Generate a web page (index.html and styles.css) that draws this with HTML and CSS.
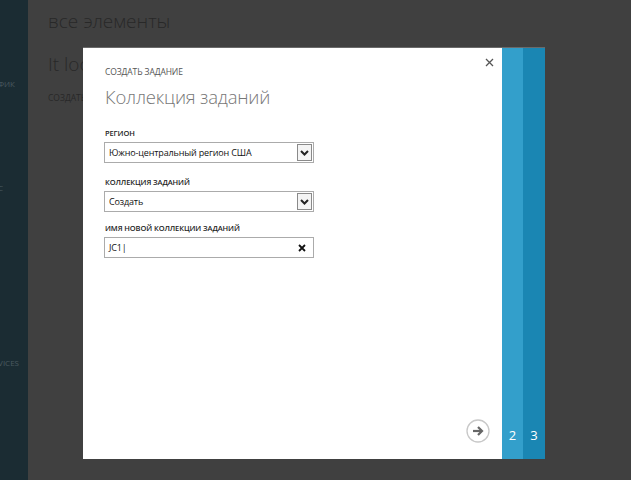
FILE: index.html
```html
<!DOCTYPE html>
<html lang="ru">
<head>
<meta charset="utf-8">
<title>Создать задание</title>
<link rel="stylesheet" href="styles.css">
</head>
<body>
<div class="app">
  <nav class="sidebar">
    <div class="nav-item n1">ГРАФИК</div>
    <div class="nav-item n2">C</div>
    <div class="nav-item n3">SERVICES</div>
  </nav>
  <main class="main">
    <h1 class="page-title">все элементы</h1>
    <div class="page-sub">It looks like you have no job collections</div>
    <div class="page-link">СОЗДАТЬ ЗАДАНИЕ</div>
  </main>
</div>

<div class="dialog">
  <section class="panel">
    <button class="close" aria-label="Закрыть">
      <svg width="9" height="9" viewBox="0 0 9 9"><path d="M1 1 L8 8 M8 1 L1 8" stroke="#555" stroke-width="1.3"/></svg>
    </button>
    <div class="eyebrow">СОЗДАТЬ ЗАДАНИЕ</div>
    <h2 class="title">Коллекция заданий</h2>

    <div class="field f1">
      <label class="label">РЕГИОН</label>
      <div class="select">
        <span class="value">Южно-центральный регион США</span>
        <span class="drop"><svg width="9" height="6" viewBox="0 0 9 6"><path d="M1 1 L4.5 4.5 L8 1" fill="none" stroke="#222" stroke-width="2"/></svg></span>
      </div>
    </div>

    <div class="field f2">
      <label class="label">КОЛЛЕКЦИЯ ЗАДАНИЙ</label>
      <div class="select">
        <span class="value">Создать</span>
        <span class="drop"><svg width="9" height="6" viewBox="0 0 9 6"><path d="M1 1 L4.5 4.5 L8 1" fill="none" stroke="#222" stroke-width="2"/></svg></span>
      </div>
    </div>

    <div class="field f3">
      <label class="label">ИМЯ НОВОЙ КОЛЛЕКЦИИ ЗАДАНИЙ</label>
      <div class="input">
        <span class="value">JC1|</span>
        <span class="clear"><svg width="8" height="8" viewBox="0 0 8 8"><path d="M1 1 L7 7 M7 1 L1 7" stroke="#111" stroke-width="1.8"/></svg></span>
      </div>
    </div>

    <div class="footer">
      <button class="next" aria-label="Далее">
        <svg width="24" height="24" viewBox="0 0 24 24">
          <circle cx="12" cy="12" r="11" fill="none" stroke="#c8c8c8" stroke-width="1.3"/>
          <path d="M7 12 H15.5" stroke="#666" stroke-width="2.2"/>
          <path d="M12 8 L16 12 L12 16" fill="none" stroke="#666" stroke-width="2.2"/>
        </svg>
      </button>
    </div>
  </section>
  <div class="step s2">2</div>
  <div class="step s3">3</div>
</div>
</body>
</html>
```

FILE: styles.css
```css
* { box-sizing: border-box; }
html, body { margin: 0; padding: 0; }
body {
  width: 631px;
  height: 480px;
  overflow: hidden;
  background: #404040;
  font-family: "Open Sans", "Noto Sans", sans-serif;
  position: relative;
}
.app { display: flex; height: 480px; }
.sidebar {
  width: 28px;
  background: #1b2c33;
  position: relative;
  overflow: hidden;
  flex: none;
}
.nav-item {
  position: absolute;
  right: 10px;
  font-size: 8px;
  color: #4a5a60;
  white-space: nowrap;
}
.n1 { top: 78px; right: 13px; }
.n2 { top: 182px; right: 25px; }
.n3 { top: 357px; right: 9px; }
.main {
  flex: 1;
  padding: 8px 0 0 20px;
  color: #262626;
}
.page-title {
  margin: 0;
  font-weight: 300;
  font-size: 19px;
  line-height: 26px;
  color: #282828;
}
.page-sub {
  margin-top: 17px;
  font-weight: 300;
  font-size: 19px;
  line-height: 26px;
  color: #282828;
  white-space: nowrap;
}
.page-link {
  margin-top: 15px;
  font-size: 8.5px;
  color: #282828;
}

.dialog {
  position: absolute;
  left: 83px;
  top: 47px;
  height: 412px;
  display: flex;
  border-top: 1px solid #6a6a6a;
}
.panel {
  width: 419px;
  background: #fff;
  position: relative;
  padding: 18px 22px 0 22px;
  display: flex;
  flex-direction: column;
}
.close {
  position: absolute;
  right: 8px;
  top: 10px;
  border: 0;
  background: none;
  padding: 0;
  width: 9px;
  height: 9px;
  display: flex;
}
.eyebrow {
  font-size: 8.5px;
  color: #555;
  line-height: 12px;
  letter-spacing: -0.1px;
}
.title {
  margin: 6px 0 0;
  font-weight: 300;
  font-size: 18.5px;
  line-height: 26px;
  color: #777;
  letter-spacing: -0.2px;
}
.field { display: flex; flex-direction: column; }
.f1 { margin-top: 17px; }
.f2 { margin-top: 13px; }
.f3 { margin-top: 10px; }
.label {
  font-size: 7.5px;
  font-weight: 600;
  color: #222;
  line-height: 12px;
  margin-bottom: 3px;
  letter-spacing: -0.1px;
}
.select, .input {
  width: 210px;
  height: 21px;
  border: 1px solid #ababab;
  margin-left: -1px;
  display: flex;
  align-items: center;
  padding-left: 4px;
  font-size: 9px;
  color: #111;
}
.value { flex: 1; letter-spacing: -0.15px; }
.drop {
  width: 15px;
  height: 17px;
  margin-right: 1px;
  border: 1px solid #8a8a8a;
  display: flex;
  align-items: center;
  justify-content: center;
  background: #f4f4f4;
}
.clear {
  width: 8px;
  height: 8px;
  margin-right: 7px;
  display: flex;
}
.footer {
  margin-top: auto;
  display: flex;
  justify-content: flex-end;
  padding: 0 0 16px 0;
  margin-right: -10px;
}
.next {
  border: 0;
  background: none;
  padding: 0;
  width: 24px;
  height: 24px;
  display: flex;
}
.step {
  width: 21px;
  color: #fff;
  font-size: 13px;
  display: flex;
  align-items: flex-end;
  justify-content: center;
  padding-bottom: 15px;
}
.s2 { background: #339fcb; }
.s3 { background: #1a86b3; width: 22px; }
```
